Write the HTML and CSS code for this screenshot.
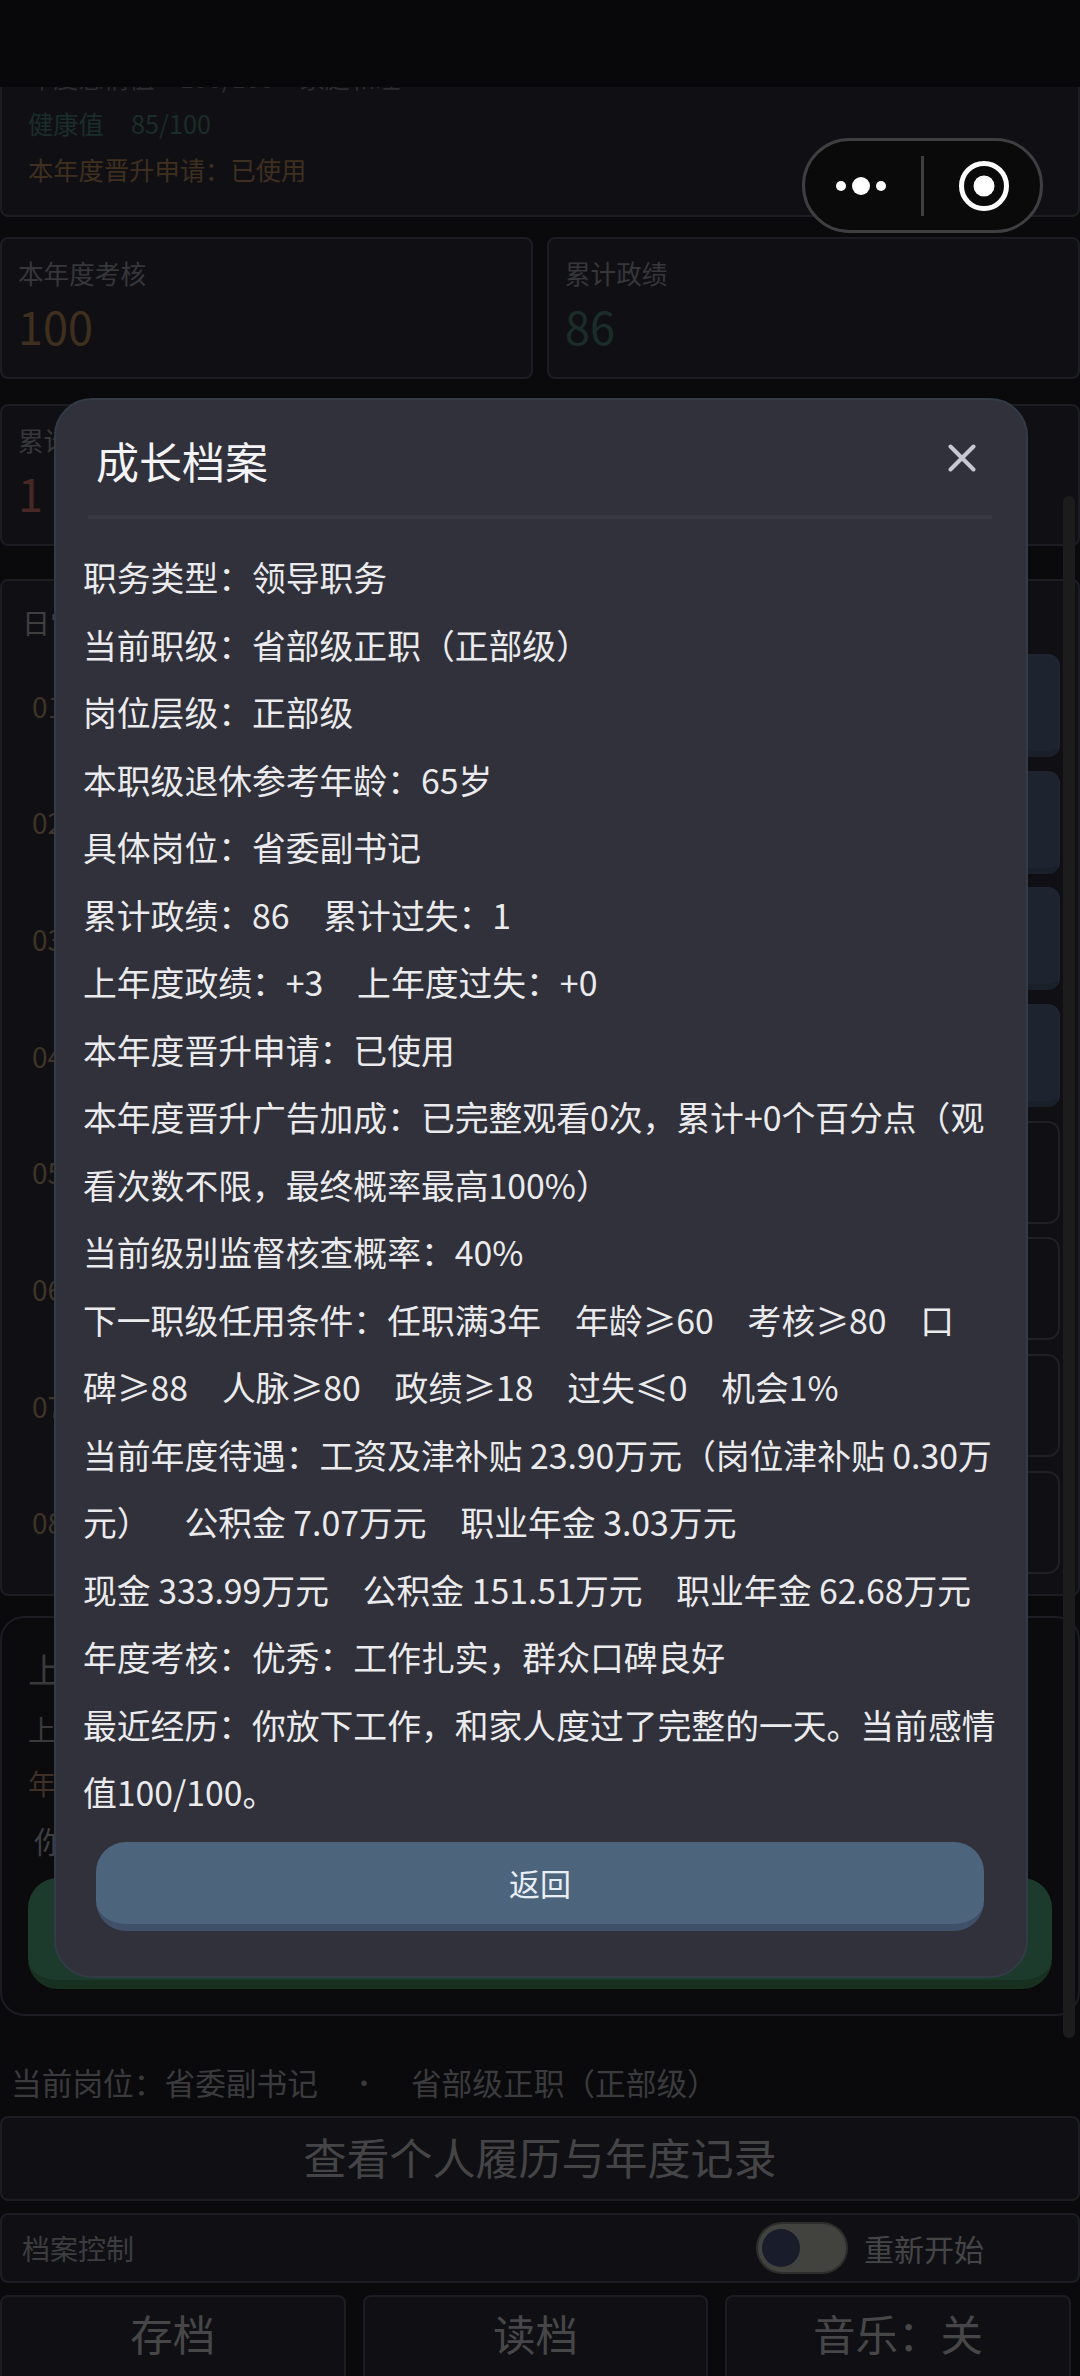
FILE: index.html
```html
<!DOCTYPE html>
<html lang="zh-CN">
<head>
<meta charset="utf-8">
<title>成长档案</title>
<link rel="stylesheet" href="styles.css">
</head>
<body>
<div class="page">
  <main class="content">
    <section class="card status">
      <p class="line muted">年度感情值　100/100　家庭和睦</p>
      <p class="line green">健康值<span class="sp">85/100</span></p>
      <p class="line tan">本年度晋升申请：已使用</p>
    </section>
    <section class="stats">
      <div class="card stat"><div class="stat-label">本年度考核</div><div class="stat-value tan">100</div></div>
      <div class="card stat"><div class="stat-label">累计政绩</div><div class="stat-value green">86</div></div>
    </section>
    <section class="stats stats-b">
      <div class="card stat"><div class="stat-label">累计过失</div><div class="stat-value red">1</div></div>
      <div class="card stat"><div class="stat-label">机会</div><div class="stat-value green">1%</div></div>
    </section>
    <section class="card log">
      <h2 class="log-title">日常行动</h2>
      <div class="log-rows">
        <div class="log-row"><span class="log-no">01</span><span class="slot slot-on"></span></div>
        <div class="log-row"><span class="log-no">02</span><span class="slot slot-on"></span></div>
        <div class="log-row"><span class="log-no">03</span><span class="slot slot-on"></span></div>
        <div class="log-row"><span class="log-no">04</span><span class="slot slot-on"></span></div>
        <div class="log-row"><span class="log-no">05</span><span class="slot"></span></div>
        <div class="log-row"><span class="log-no">06</span><span class="slot"></span></div>
        <div class="log-row"><span class="log-no">07</span><span class="slot"></span></div>
        <div class="log-row"><span class="log-no">08</span><span class="slot"></span></div>
      </div>
    </section>
    <section class="card result">
      <h2 class="result-title">上一年度</h2>
      <p class="result-line">上年度政绩</p>
      <p class="result-line tan">年度考核</p>
      <p class="result-line result-you">你放下工作</p>
      <button class="green-btn" type="button">继续</button>
    </section>
    <p class="meta"><span>当前岗位：省委副书记</span><span class="meta-dot">•</span><span>省部级正职（正部级）</span></p>
    <button class="card record" type="button">查看个人履历与年度记录</button>
    <section class="card control">
      <span class="control-label">档案控制</span>
      <span class="control-right"><span class="toggle"><span class="knob"></span></span><span class="restart">重新开始</span></span>
    </section>
    <nav class="actions">
      <button class="card action" type="button">存档</button>
      <button class="card action" type="button">读档</button>
      <button class="card action" type="button">音乐：关</button>
    </nav>
  </main>

  <div class="topbar"></div>
  <div class="capsule">
    <svg class="cap-icon" width="58" height="24" viewBox="0 0 58 24"><circle cx="9" cy="12" r="5" fill="#fff"/><circle cx="29" cy="12" r="9" fill="#fff"/><circle cx="49" cy="12" r="5" fill="#fff"/></svg>
    <span class="cap-div"></span>
    <svg class="cap-icon" width="52" height="52" viewBox="0 0 52 52"><circle cx="26" cy="26" r="22.5" fill="none" stroke="#fff" stroke-width="5"/><circle cx="26" cy="26" r="10.5" fill="#fff"/></svg>
  </div>
  <div class="scrollbar"></div>

  <div class="modal">
    <header class="modal-head">
      <h1 class="modal-title">成长档案</h1>
      <svg class="close" width="28" height="28" viewBox="0 0 28 28"><path d="M2.500 2.500 25.500 25.500M25.500 2.500 2.500 25.500" stroke="#c6c8d3" stroke-width="4" stroke-linecap="round" fill="none"/></svg>
    </header>
    <div class="modal-body">
      <p>职务类型：领导职务</p>
      <p>当前职级：省部级正职（正部级）</p>
      <p>岗位层级：正部级</p>
      <p>本职级退休参考年龄：65岁</p>
      <p>具体岗位：省委副书记</p>
      <p>累计政绩：86　累计过失：1</p>
      <p>上年度政绩：+3　上年度过失：+0</p>
      <p>本年度晋升申请：已使用</p>
      <p>本年度晋升广告加成：已完整观看0次，累计+0个百分点（观看次数不限，最终概率最高100%）</p>
      <p>当前级别监督核查概率：40%</p>
      <p>下一职级任用条件：任职满3年　年龄≥60　考核≥80　口<br>碑≥88　人脉≥80　政绩≥18　过失≤0　机会1%</p>
      <p>当前年度待遇：工资及津补贴 23.90万元（岗位津补贴 0.30万元）　公积金 7.07万元　职业年金 3.03万元</p>
      <p>现金 333.99万元　公积金 151.51万元　职业年金 62.68万元</p>
      <p>年度考核：优秀：工作扎实，群众口碑良好</p>
      <p>最近经历：你放下工作，和家人度过了完整的一天。当前感情值100/100。</p>
    </div>
    <button class="back" type="button">返回</button>
  </div>
</div>
</body>
</html>
```
FILE: styles.css
```css
* { box-sizing: border-box; }
html, body { margin: 0; padding: 0; }
body { background: #0a0a0d; font-family: "Noto Sans CJK SC", "Noto Sans", sans-serif; }
p, h1, h2 { margin: 0; font-weight: 400; }
button { font-family: inherit; padding: 0; cursor: pointer; }

.page { position: relative; width: 1080px; height: 2376px; overflow: hidden; background: #0a0a0d; }
.content { display: flex; flex-direction: column; height: 2376px; }

.card { background: #101014; border: 2px solid #1c1d23; border-radius: 8px; }

.status { height: 217px; padding: 54px 26px 0; border-top: 0; flex: none; }
.line { font-size: 25.300px; line-height: 46px; color: #2c2d30; }
.sp { margin-left: 27px; }
.line.green, .green { color: #1b2d28; }
.line.tan, .tan { color: #3f2f1f; }
.red { color: #462824; }

.stats { display: grid; grid-template-columns: 533px 533px; justify-content: space-between; margin-top: 20px; flex: none; }
.stats-b { margin-top: 25px; }
.stat { height: 142px; padding: 14px 15px 0 16px; }
.stat-label { font-size: 25.600px; line-height: 40px; color: #37373b; }
.stat-value { font-size: 45px; line-height: 66px; }

.log { height: 1017px; margin-top: 33px; padding: 21px 18px 0 20px; flex: none; }
.log-title { font-size: 28px; line-height: 40px; color: #3f3f42; }
.log-rows { display: flex; flex-direction: column; gap: 13.700px; margin-top: 12px; }
.log-row { display: flex; justify-content: space-between; align-items: center; height: 103px; padding-left: 10px; }
.log-no { font-size: 28px; color: #3f3427; }
.slot { width: 880px; height: 103px; border: 2px solid #1f2026; border-radius: 12px; background: #101014; }
.slot-on { background: #1d2430; border-color: #20273380; border-bottom: 6px solid #1a2029; }

.result { height: 400px; margin-top: 20px; padding: 28px 26px 0; border-radius: 24px; background: #0b0b0e; flex: none; }
.result-title { font-size: 34px; line-height: 46px; color: #3a3a3d; }
.result-line { font-size: 28px; line-height: 54px; margin-top: 10px; color: #3a3a3d; }
.result-line.tan { margin-top: 0; color: #3f3026; }
.result-you { font-size: 30px; margin-top: 3px; padding-left: 6px; color: #3f3f42; }
.green-btn { display: block; width: 1024px; height: 111px; margin-top: 11px; border: 0; border-bottom: 9px solid #17301f; border-radius: 30px; background: #1c3b2c; color: #3c4d42; font-size: 32px; }

.meta { display: flex; align-items: center; height: 44px; margin-top: 43px; padding-left: 11px; font-size: 30.700px; color: #3b3b3e; flex: none; text-spacing-trim: space-all; }
.meta-dot { margin: 0 34px 0 33px; font-size: 26px; }
.record { display: block; width: 100%; height: 85px; margin-top: 13px; padding-bottom: 5px; color: #454547; font-size: 43px; flex: none; }
.control { display: flex; justify-content: space-between; align-items: center; height: 70px; margin-top: 12px; padding: 0 94px 0 20px; flex: none; }
.control-label { font-size: 28px; color: #3d3d40; }
.control-right { display: flex; align-items: center; gap: 18px; }
.toggle { display: flex; align-items: center; width: 88px; height: 48px; padding-left: 4px; border-radius: 24px; background: #42433f; box-shadow: 0 0 0 2px #2c2d2c; }
.knob { width: 38px; height: 38px; border-radius: 50%; background: #191d2b; }
.restart { font-size: 30px; color: #454547; }
.actions { display: grid; grid-template-columns: repeat(3, 345.600px); gap: 17px; margin-top: 12px; flex: none; }
.action { height: 100px; color: #474749; font-size: 42.500px; padding-bottom: 26px; }

.topbar { position: absolute; left: 0; top: 0; width: 100%; height: 87px; background: #08080b; }
.capsule { position: absolute; left: 802px; top: 138px; display: flex; justify-content: space-between; align-items: center; width: 241px; height: 95px; padding: 0 30px 0 27px; border: 3px solid #3f3f41; border-radius: 48px; background: #0a0a0b; }
.cap-icon { flex: none; }
.cap-div { width: 3px; height: 60px; margin-right: 3px; background: #3f3f41; }
.scrollbar { position: absolute; left: 1063px; top: 496px; width: 12px; height: 1542px; border-radius: 6px; background: #1c1c1c; }

.modal { position: absolute; left: 54px; top: 398px; display: flex; flex-direction: column; width: 974px; height: 1580px; padding: 0 26px 0 27px; border: 2px solid #333b47; border-radius: 38px; background: #30313a; }
.modal-head { display: flex; justify-content: space-between; align-items: center; flex: none; height: 119px; margin: 0 8px 0 5px; padding: 0 16px 0 8px; border-bottom: 4px solid #373a45; }
.modal-title { font-size: 43px; line-height: 60px; color: #f4f4f6; padding-top: 4px; }
.modal-body { flex: none; padding-top: 24px; font-size: 33.800px; line-height: 67.500px; color: #ebebed; text-spacing-trim: space-all; }
.back { display: block; flex: none; width: 888px; height: 89px; margin: 16px 0 0 13px; border: 0; border-bottom: 7px solid #3f5068; border-radius: 30px; background: #4d647d; color: #e8eef5; font-size: 31px; }
```
